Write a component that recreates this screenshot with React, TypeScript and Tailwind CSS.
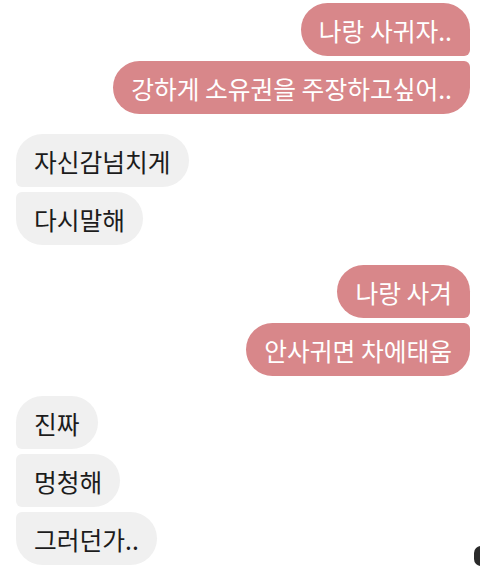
import React from "react";

type Msg = { text: string; mine: boolean };

const groups: Msg[][] = [
  [
    { text: "나랑 사귀자..", mine: true },
    { text: "강하게 소유권을 주장하고싶어..", mine: true },
  ],
  [
    { text: "자신감넘치게", mine: false },
    { text: "다시말해", mine: false },
  ],
  [
    { text: "나랑 사겨", mine: true },
    { text: "안사귀면 차에태움", mine: true },
  ],
  [
    { text: "진짜", mine: false },
    { text: "멍청해", mine: false },
    { text: "그러던가..", mine: false },
  ],
];

// 묶음 안에서의 위치에 따라 모서리 모양이 달라짐
const cornerClass = (mine: boolean, idx: number, count: number) => {
  const first = idx === 0;
  const last = idx === count - 1;
  if (mine) {
    return `rounded-l-[27px] ${first ? "rounded-tr-[27px]" : "rounded-tr-[6px]"} ${
      last ? "rounded-br-[27px]" : "rounded-br-[6px]"
    }`;
  }
  return `rounded-r-[27px] ${first ? "rounded-tl-[27px]" : "rounded-tl-[6px]"} ${
    last ? "rounded-bl-[27px]" : "rounded-bl-[6px]"
  }`;
};

const Bubble: React.FC<{ msg: Msg; idx: number; count: number }> = ({
  msg,
  idx,
  count,
}) => (
  <div className={`flex ${msg.mine ? "justify-end" : "justify-start"}`}>
    <div
      className={`h-[53px] flex items-center px-[18px] text-[24.75px] leading-[30px] whitespace-nowrap ${cornerClass(
        msg.mine,
        idx,
        count
      )} ${msg.mine ? "bg-[#d8878a] text-white" : "bg-[#f0f0f0] text-[#1c1c1c]"}`}
    >
      {msg.text}
    </div>
  </div>
);

export default function App() {
  return (
    <div
      className="relative w-[480px] h-[576px] overflow-hidden bg-white pt-[3px] pl-4 pr-[10px] flex flex-col gap-5"
      style={{ fontFamily: '"Noto Sans CJK KR", "Noto Sans", sans-serif' }}
    >
      {groups.map((g, gi) => (
        <div key={gi} className="flex flex-col gap-[5px]">
          {g.map((m, i) => (
            <Bubble key={i} msg={m} idx={i} count={g.length} />
          ))}
        </div>
      ))}
      {/* 오른쪽 아래 잘린 아이콘 */}
      <div className="absolute left-[474px] top-[546px] w-[14px] h-[20px] rounded-full bg-[#2a2a2a]" />
    </div>
  );
}
